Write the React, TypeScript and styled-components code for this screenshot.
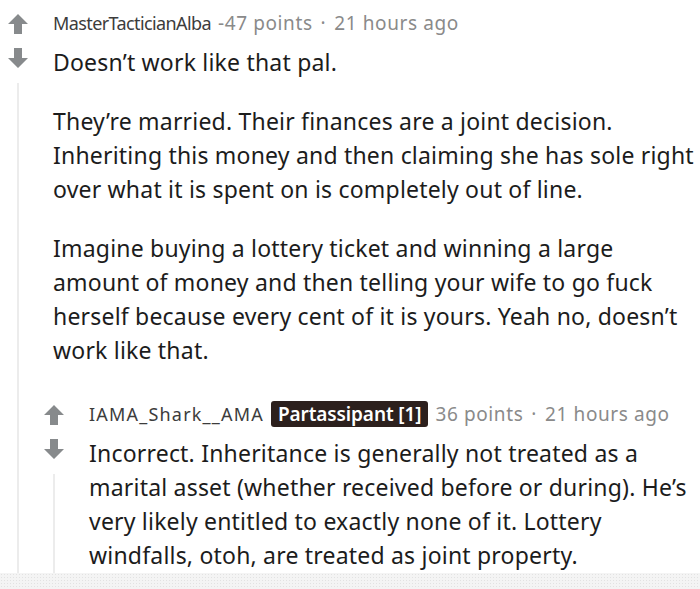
import React from 'react'
import styled, { createGlobalStyle } from 'styled-components'

const GlobalStyle = createGlobalStyle`
  html, body {
    margin: 0;
    padding: 0;
    background: #ffffff;
  }
  body {
    font-family: "Noto Sans", "Open Sans", sans-serif;
    color: #1c1c1c;
  }
`

const Page = styled.div`
  width: 700px;
  height: 589px;
  overflow: hidden;
  display: flex;
  flex-direction: column;
`

const Thread = styled.div`
  flex: 1;
  min-height: 0;
  padding-top: 9px;
  overflow: hidden;
`

const CommentWrap = styled.div<{ $nested?: boolean }>`
  display: grid;
  grid-template-columns: 36px 1fr;
  grid-template-rows: auto 1fr;
  margin-top: ${({ $nested }) => ($nested ? 8 : 0)}px;
`

const VoteColumn = styled.div`
  grid-row: 1 / span 2;
  display: flex;
  flex-direction: column;
  align-items: center;
  gap: 12px;
  padding-top: 4px;
`

const ThreadLine = styled.div`
  flex: 1;
  width: 2px;
  margin-top: 2px;
  background: #ececec;
`

const Body = styled.div`
  padding-left: 17px;
  padding-right: 6px;
  min-width: 0;
`

const Replies = styled.div`
  grid-column: 2;
  min-width: 0;
`

const Meta = styled.div`
  display: flex;
  align-items: center;
  height: 28px;
  white-space: nowrap;
`

const Author = styled.span<{ $spacing: number }>`
  color: #3c3c3c;
  font-size: 18px;
  letter-spacing: ${({ $spacing }) => $spacing}px;
  margin-right: 7px;
`

const Flair = styled.span`
  background: #2c201d;
  color: #ffffff;
  font-weight: 600;
  font-size: 19px;
  letter-spacing: -0.1px;
  padding: 0 7px;
  height: 26px;
  line-height: 26px;
  border-radius: 3px;
  margin-right: 7px;
`

const Muted = styled.span`
  color: #8a8a8a;
  font-size: 19px;
  letter-spacing: 0.6px;
`

const Dot = styled.span`
  margin: 0 8px;
`

const Text = styled.div`
  font-size: 23px;
  line-height: 34px;
  letter-spacing: 0.2px;
  margin-top: 8px;

  p {
    margin: 0 0 25px 0;
  }
`

const BottomBand = styled.div`
  height: 16px;
  background-color: #f4f4f4;
  background-image: radial-gradient(#e2e2e2 0.6px, transparent 0.8px);
  background-size: 3px 3px;
`

function Arrow({ down }: { down?: boolean }) {
  return (
    <svg width="22" height="22" viewBox="0 0 22 22" style={{ transform: down ? 'rotate(180deg)' : undefined }}>
      <path d="M11 1 L21 11 L15 11 L15 21 L7 21 L7 11 L1 11 Z" fill="#878a8c" />
    </svg>
  )
}

type CommentProps = {
  author: string
  authorSpacing?: number
  flair?: string
  points: string
  time: string
  paragraphs: string[]
  nested?: boolean
  children?: React.ReactNode
}

function Comment({ author, authorSpacing = 0, flair, points, time, paragraphs, nested, children }: CommentProps) {
  return (
    <CommentWrap $nested={nested}>
      <VoteColumn>
        <Arrow />
        <Arrow down />
        <ThreadLine />
      </VoteColumn>
      <Body>
        <Meta>
          <Author $spacing={authorSpacing}>{author}</Author>
          {flair && <Flair>{flair}</Flair>}
          <Muted>
            {points}
            <Dot>·</Dot>
            {time}
          </Muted>
        </Meta>
        <Text>
          {paragraphs.map((p, i) => (
            <p key={i}>{p}</p>
          ))}
        </Text>
      </Body>
      {children && <Replies>{children}</Replies>}
    </CommentWrap>
  )
}

export default function App() {
  return (
    <Page>
      <GlobalStyle />
      <Thread>
        <Comment
          author="MasterTacticianAlba"
          authorSpacing={-0.6}
          points="-47 points"
          time="21 hours ago"
          paragraphs={[
            'Doesn\u2019t work like that pal.',
            'They\u2019re married. Their finances are a joint decision. Inheriting this money and then claiming she has sole right over what it is spent on is completely out of line.',
            'Imagine buying a lottery ticket and winning a large amount of money and then telling your wife to go fuck herself because every cent of it is yours. Yeah no, doesn\u2019t work like that.',
          ]}
        >
          <Comment
            nested
            author="IAMA_Shark__AMA"
            authorSpacing={1.2}
            flair="Partassipant [1]"
            points="36 points"
            time="21 hours ago"
            paragraphs={[
              'Incorrect. Inheritance is generally not treated as a marital asset (whether received before or during). He\u2019s very likely entitled to exactly none of it. Lottery windfalls, otoh, are treated as joint property.',
            ]}
          />
        </Comment>
      </Thread>
      <BottomBand />
    </Page>
  )
}
